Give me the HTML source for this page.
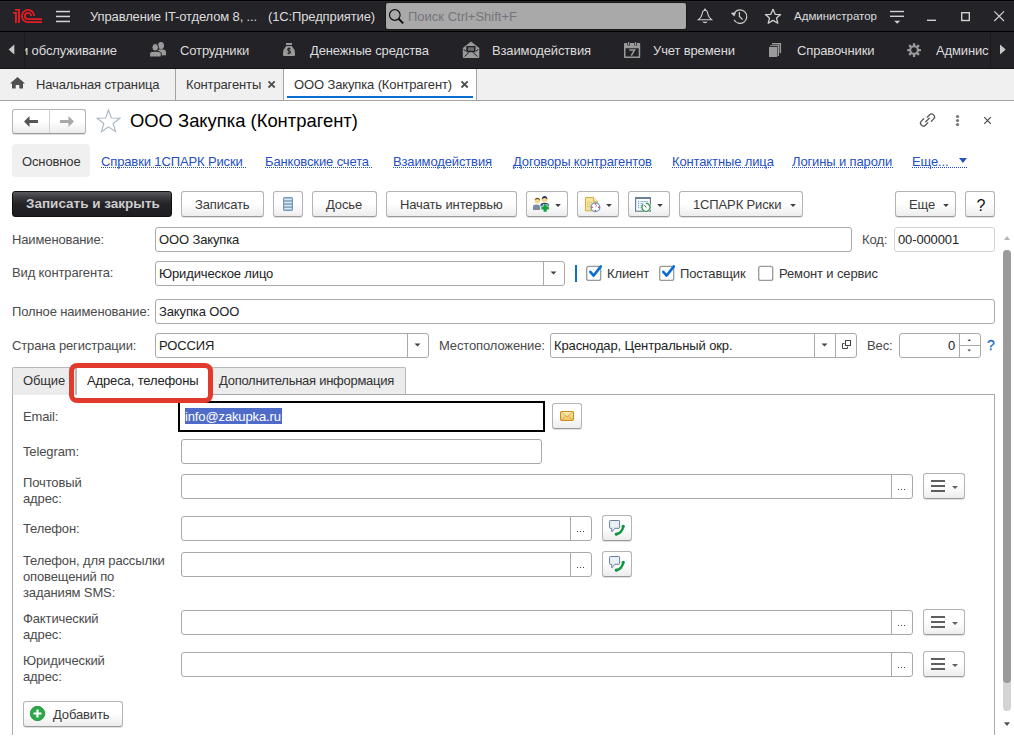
<!DOCTYPE html>
<html><head><meta charset="utf-8">
<style>
html,body{margin:0;padding:0;width:1014px;height:747px;overflow:hidden;background:#fff;font-family:"Liberation Sans",sans-serif;}
.a{position:absolute;}
.t{position:absolute;white-space:nowrap;font-size:13px;line-height:16px;margin-top:1px;letter-spacing:-0.13px;}
svg{position:absolute;overflow:visible;}
#top{left:0;top:0;width:1014px;height:31px;background:#242328;}
#topline{left:0;top:31px;width:1014px;height:1px;background:#000;}
#sec{left:0;top:32px;width:1014px;height:36px;background:#232227;}
#secline{left:0;top:68px;width:1014px;height:1px;background:#141414;}
#tabs{left:0;top:69px;width:1014px;height:31px;background:#f0f0f0;}
#tabsline{left:0;top:100px;width:1014px;height:1px;background:#a3a3a3;}
.lt{color:#dcdcdc;}
.sep{position:absolute;width:1px;background:#a3a3a3;}
.btn{position:absolute;box-sizing:border-box;border:1px solid #b3b3b3;border-bottom-color:#9a9a9a;border-radius:3px;background:linear-gradient(#ffffff 0%,#ffffff 48%,#ededed 100%);box-shadow:0 1px 0 rgba(0,0,0,0.12);}
.fld{position:absolute;box-sizing:border-box;border:1px solid #a9a9a9;border-radius:3px;background:#fff;}
.lbl{position:absolute;white-space:nowrap;font-size:13px;line-height:16px;color:#4a4a4a;margin-top:1px;letter-spacing:-0.13px;}
.link{position:absolute;white-space:nowrap;font-size:13px;line-height:16px;color:#2550c4;margin-top:1px;letter-spacing:-0.13px;}
.ul{position:absolute;height:1px;background-image:linear-gradient(to right,#2550c4 50%,transparent 50%);background-size:2px 1px;}
</style></head><body>
<!-- TOP BAR -->
<div class="a" id="top"></div>
<div class="a" id="topline"></div>
<div class="a" style="left:0;top:0;width:1014px;height:1px;background:#000;"></div>
<div class="a" style="left:0;top:1px;width:1014px;height:1px;background:#29282d;"></div>
<svg width="1014" height="31" style="left:0;top:0">
  <!-- 1C logo -->
  <g fill="#e21d23">
    <rect x="15" y="9" width="5" height="1.6"/>
    <rect x="18" y="9" width="1.9" height="14"/>
    <rect x="13" y="12" width="4" height="1.6"/>
    <rect x="15" y="12" width="1.9" height="11"/>
  </g>
  <g fill="none" stroke="#e21d23" stroke-width="1.8">
    <path d="M34.1 16 A6.1 6.1 0 1 0 28 22.1 L42 22.1"/>
    <path d="M31.1 16 A3.1 3.1 0 1 0 28 19.1 L42 19.1"/>
  </g>
  <!-- hamburger -->
  <g fill="#d6d6d6">
    <rect x="56" y="10.8" width="14" height="1.5"/>
    <rect x="56" y="15.7" width="14" height="1.5"/>
    <rect x="56" y="20.7" width="14" height="1.5"/>
  </g>
  <!-- search box -->
  <rect x="385.5" y="2.5" width="301" height="27" rx="2.5" fill="none" stroke="#19191b" stroke-width="1"/><rect x="386" y="3" width="300" height="26" rx="2" fill="#a9a9a9"/>
  <circle cx="394.8" cy="15" r="5.3" fill="none" stroke="#111" stroke-width="1.2"/>
  <path d="M398.6 18.8 L403.2 23.4" stroke="#111" stroke-width="2"/>
  <!-- bell -->
  <g fill="none" stroke="#cfcfcf" stroke-width="1.1">
    <path d="M705 10.3 C702.6 10.3 702.4 12.2 702.1 14.2 C701.7 17 700.2 18.4 698.4 19.8 L711.6 19.8 C709.8 18.4 708.3 17 707.9 14.2 C707.6 12.2 707.4 10.3 705 10.3 Z"/>
  </g>
  <circle cx="705" cy="9.6" r="1" fill="#cfcfcf"/>
  <path d="M702 21.7 L708 21.7 Q705 24.6 702 21.7 Z" fill="#cfcfcf"/>
  <!-- history -->
  <g fill="none" stroke="#cfcfcf" stroke-width="1.2">
    <path d="M734.95 12.05 A6.8 6.8 0 1 1 734.00 19.79"/>
    <path d="M739.4 12 L739.4 16.5 L742.6 19.5"/>
  </g>
  <path d="M730.8 13.1 L736.2 12 L734.3 16.6 Z" fill="#cfcfcf"/>
  <!-- star -->
  <path d="M773 9.3 L775.2 14.3 L780.6 14.6 L776.5 18.1 L777.8 23.2 L773 20.4 L768.2 23.2 L769.5 18.1 L765.4 14.6 L770.8 14.3 Z" fill="none" stroke="#d0d0d0" stroke-width="1.3" stroke-linejoin="round"/>
  <!-- filter -->
  <g fill="#d0d0d0">
    <rect x="890" y="10.8" width="14" height="1.4"/>
    <rect x="890" y="15.6" width="14" height="1.4"/>
    <path d="M894.2 20.8 L900.2 20.8 L897.2 23.8 Z"/>
  </g>
  <!-- minimize -->
  <rect x="927" y="19.6" width="9" height="1.4" fill="#d0d0d0"/>
  <!-- maximize -->
  <rect x="961.7" y="12.7" width="7.6" height="7.8" fill="none" stroke="#d0d0d0" stroke-width="1.4"/>
  <!-- close -->
  <path d="M994.3 11.3 L1004 21 M1004 11.3 L994.3 21" stroke="#d0d0d0" stroke-width="1.2"/>
</svg>
<div class="t lt" style="left:90px;top:8px;">Управление IT-отделом 8, ...</div>
<div class="t lt" style="left:268px;top:8px;">(1С:Предприятие)</div>
<div class="t" style="left:408px;top:8px;color:#75757c;letter-spacing:0;">Поиск Ctrl+Shift+F</div>
<div class="t lt" style="left:794px;top:7px;font-size:11.5px;letter-spacing:0;">Администратор</div>

<!-- SECTIONS BAR -->
<div class="a" id="sec"></div>
<div class="a" id="secline"></div>
<div class="a" style="left:24px;top:32px;width:1px;height:36px;background:#1a1a1c;"></div>
<div class="a" style="left:990px;top:32px;width:1px;height:36px;background:#1a1a1c;"></div>
<div class="a" style="left:25px;top:32px;width:964px;height:36px;overflow:hidden;">
  <div class="t lt" style="left:-4px;top:10px;">и обслуживание</div>
  <div class="t lt" style="left:155px;top:10px;">Сотрудники</div>
  <div class="t lt" style="left:285px;top:10px;">Денежные средства</div>
  <div class="t lt" style="left:467px;top:10px;">Взаимодействия</div>
  <div class="t lt" style="left:628px;top:10px;">Учет времени</div>
  <div class="t lt" style="left:772px;top:10px;">Справочники</div>
  <div class="t lt" style="left:911px;top:10px;">Администрирование</div>
</div>
<svg width="1014" height="36" style="left:0;top:32px">
  <path d="M14.3 12.6 L14.3 22.5 L8.6 17.5 Z" fill="#c8c8c8"/>
  <path d="M1000 12.6 L1000 22.5 L1005.7 17.5 Z" fill="#c8c8c8"/>
</svg>


<svg width="1014" height="747" style="left:0;top:0">
  <g fill="#9a9a9a">
    <!-- people -->
    <ellipse cx="161" cy="45.5" rx="3" ry="3.6"/>
    <path d="M157.5 55.5 L157.5 51.5 Q158 49.3 161 49.3 Q165.5 49.3 166 51.5 L166 55.3 Z"/>
    <ellipse cx="155.2" cy="47.4" rx="3.3" ry="3.8" stroke="#232227" stroke-width="1"/>
    <path d="M149.6 57 L149.6 53.5 Q150 51.2 155.2 51.2 Q160.6 51.2 161.2 53.5 L161.2 57 Z" stroke="#232227" stroke-width="1"/>
    <!-- money bag -->
    <rect x="286" y="43" width="6" height="2"/>
    <path d="M286.2 46 L291.8 46 Q295 49.5 295 53 L295 55 Q295 56 294 56 L284 56 Q283 56 283 55 L283 53 Q283 49.5 286.2 46 Z"/>
    <!-- envelope -->
    <path d="M471 41.5 L479.3 48 L479.3 57 Q479.3 58 478.3 58 L463.8 58 Q462.8 58 462.8 57 L462.8 48 Z"/>
    <!-- calendar -->
    <path d="M625 43 H639.2 Q640.2 43 640.2 44 V57 Q640.2 58 639.2 58 H625 Q624 58 624 57 V44 Q624 43 625 43 Z M625.5 48.2 V56.5 H638.7 V48.2 Z" fill-rule="evenodd"/>
    <!-- copies -->
    <rect x="769" y="46.8" width="8.1" height="10.2"/>
    <path d="M770 45 H779 V56 H777.6 V46.4 H770 Z"/>
    <path d="M772 43 H781.1 V53 H779.6 V44.5 H772 Z"/>
    <!-- gear -->
    <path d="M912.91 45.31 L912.89 43.17 L915.25 43.17 L915.23 45.31 L916.61 45.88 L918.11 44.35 L919.79 46.03 L918.26 47.53 L918.83 48.91 L920.97 48.89 L920.97 51.25 L918.83 51.23 L918.26 52.61 L919.79 54.11 L918.11 55.79 L916.61 54.26 L915.23 54.83 L915.25 56.97 L912.89 56.97 L912.91 54.83 L911.53 54.26 L910.03 55.79 L908.35 54.11 L909.88 52.61 L909.31 51.23 L907.17 51.25 L907.17 48.89 L909.31 48.91 L909.88 47.53 L908.35 46.03 L910.03 44.35 L911.53 45.88 Z M916.87 50.07 A2.8 2.8 0 1 0 911.27 50.07 A2.8 2.8 0 1 0 916.87 50.07 Z" fill-rule="evenodd"/>
  </g>
  <g fill="none" stroke="#232227" stroke-width="1">
    <path d="M290.5 48.8 Q289 48 288 48.8 Q287.3 50 289 50.7 Q290.8 51.4 290.2 52.8 Q289.2 53.8 287.5 53" stroke-width="1.2"/>
    <path d="M289 47.5 V54.3" stroke-width="0.9"/>
  </g>
  <g>
    <rect x="466.3" y="46" width="9.2" height="6.2" fill="#232227"/>
    <rect x="468" y="47.3" width="6" height="3.5" fill="#6a6a6a"/>
    <path d="M464.5 56.5 L469.5 52 M477.5 56.5 L472.5 52 M463.5 49.5 L466 51 M478.5 49.5 L476 51" stroke="#232227" stroke-width="1" fill="none"/>
    <path d="M628.6 41.8 V45.5 M635.6 41.8 V45.5" stroke="#232227" stroke-width="2.4"/>
    <path d="M628.6 42 V45.2 M635.6 42 V45.2" stroke="#9a9a9a" stroke-width="1.1"/>
    <path d="M629.3 50 H634.6 L631.3 55.7" stroke="#9a9a9a" stroke-width="1.5" fill="none"/>
    <path d="M768.5 46.3 H777.6" stroke="#232227" stroke-width="1"/>
  </g>
</svg>

<!-- TABS BAR -->
<div class="a" id="tabs"></div>
<div class="a" id="tabsline"></div>
<div class="a" style="left:284px;top:69px;width:192px;height:31px;background:#fff;"></div>
<div class="sep" style="left:175px;top:69px;height:31px;"></div>
<div class="sep" style="left:283px;top:69px;height:31px;"></div>
<div class="sep" style="left:476px;top:69px;height:31px;"></div>
<div class="a" style="left:287px;top:96px;width:186px;height:2px;background:#0a6ed1;"></div>
<svg width="1014" height="31" style="left:0;top:69px">
  <path d="M17.5 8 L25 14.5 L23 14.5 L23 19.6 L19.3 19.6 L19.3 16 L15.7 16 L15.7 19.6 L12 19.6 L12 14.5 L10 14.5 Z" fill="#4f4f4f"/>
  <path d="M268.5 12.3 L274.7 18.5 M274.7 12.3 L268.5 18.5" stroke="#505050" stroke-width="1.8"/>
  <path d="M461.5 12.3 L467.7 18.5 M467.7 12.3 L461.5 18.5" stroke="#505050" stroke-width="1.8"/>
</svg>
<div class="t" style="left:36px;top:76px;color:#333;">Начальная страница</div>
<div class="t" style="left:186px;top:76px;color:#333;">Контрагенты</div>
<div class="t" style="left:294px;top:76px;color:#333;">ООО Закупка (Контрагент)</div>

<!-- FORM -->

<!-- form header -->
<div class="btn" style="left:12px;top:109px;width:74px;height:25px;"></div>
<div class="a" style="left:49px;top:110px;width:1px;height:23px;background:#d0d0d0;"></div>
<svg width="1014" height="40" style="left:0;top:102px">
  <path d="M24 19.5 L29.5 14 L29.5 18 L38 18 L38 21 L29.5 21 L29.5 25 Z" fill="#555"/>
  <path d="M74 19.5 L68.5 14 L68.5 18 L60 18 L60 21 L68.5 21 L68.5 25 Z" fill="#a8a8a8"/>
  <path d="M108.50 8.00 L111.38 16.04 L119.91 16.29 L113.16 21.51 L115.55 29.71 L108.50 24.90 L101.45 29.71 L103.84 21.51 L97.09 16.29 L105.62 16.04 Z" fill="none" stroke="#a9b5c1" stroke-width="1.1" stroke-linejoin="miter"/>
  <!-- link icon -->
  <g fill="none" stroke="#555" stroke-width="1.25" stroke-linecap="round" transform="translate(0,-102)">
    <path d="M927.2 117.2 L929.6 114.8 A2.9 2.9 0 0 1 933.7 118.9 L931.3 121.3"/>
    <path d="M927.8 122.8 L925.4 125.2 A2.9 2.9 0 0 1 921.3 121.1 L923.7 118.7"/>
    <path d="M925.7 121.8 L929.3 118.2"/>
  </g>
  <g fill="#777">
    <circle cx="957.5" cy="14.5" r="1.6"/>
    <circle cx="957.5" cy="18.5" r="1.6"/>
    <circle cx="957.5" cy="22.6" r="1.6"/>
  </g>
  <path d="M984.2 15.2 L990.8 21.8 M990.8 15.2 L984.2 21.8" stroke="#444" stroke-width="1.1"/>
</svg>
<div class="t" style="left:130px;top:109px;font-size:18.4px;line-height:22px;color:#000;letter-spacing:0;">ООО Закупка (Контрагент)</div>

<!-- nav links -->
<div class="a" style="left:12px;top:144px;width:78px;height:33px;background:#f0f0f0;border-radius:4px;"></div>
<div class="t" style="left:22px;top:153px;color:#333;">Основное</div>
<div class="link" style="left:101px;top:153px;">Справки 1СПАРК Риски</div>
<div class="ul" style="left:101px;top:167px;width:145px;"></div>
<div class="link" style="left:265px;top:153px;">Банковские счета</div>
<div class="ul" style="left:265px;top:167px;width:108px;"></div>
<div class="link" style="left:393px;top:153px;">Взаимодействия</div>
<div class="ul" style="left:393px;top:167px;width:100px;"></div>
<div class="link" style="left:513px;top:153px;">Договоры контрагентов</div>
<div class="ul" style="left:513px;top:167px;width:139px;"></div>
<div class="link" style="left:672px;top:153px;">Контактные лица</div>
<div class="ul" style="left:672px;top:167px;width:100px;"></div>
<div class="link" style="left:792px;top:153px;">Логины и пароли</div>
<div class="ul" style="left:792px;top:167px;width:101px;"></div>
<div class="link" style="left:912px;top:153px;">Еще...</div>
<div class="ul" style="left:912px;top:167px;width:56px;"></div>
<svg width="20" height="10" style="left:958px;top:157px"><path d="M1 1 L9 1 L5 6 Z" fill="#2a53c0"/></svg>

<!-- command bar -->
<div class="a" style="left:12px;top:191px;width:160px;height:26px;box-sizing:border-box;border:1px solid #101012;border-radius:3px;background:linear-gradient(#5a595e 0%,#38373c 25%,#242328 50%,#1e1d21 100%);"></div>
<div class="t" style="left:26px;top:195px;font-weight:bold;color:#cdcdcd;font-size:13.5px;letter-spacing:0;">Записать и закрыть</div>
<div class="btn" style="left:181px;top:191px;width:83px;height:26px;"></div>
<div class="t" style="left:195px;top:196px;color:#3a3a3a;">Записать</div>
<div class="btn" style="left:273px;top:191px;width:30px;height:26px;"></div>
<svg width="14" height="16" style="left:283px;top:197px">
  <rect x="0" y="0" width="10" height="14" rx="1.8" fill="#7594b2"/>
  <g fill="#d4e6f5"><rect x="1.2" y="1.4" width="7.6" height="1.9"/><rect x="1.2" y="4.6" width="7.6" height="1.8"/><rect x="1.2" y="7.7" width="7.6" height="1.8"/><rect x="1.2" y="10.8" width="7.6" height="1.8"/></g>
</svg>
<div class="btn" style="left:312px;top:191px;width:65px;height:26px;"></div>
<div class="t" style="left:326px;top:196px;color:#3a3a3a;">Досье</div>
<div class="btn" style="left:386px;top:191px;width:131px;height:26px;"></div>
<div class="t" style="left:400px;top:196px;color:#3a3a3a;">Начать интервью</div>
<div class="btn" style="left:526px;top:191px;width:42px;height:26px;"></div>
<div class="btn" style="left:577px;top:191px;width:42px;height:26px;"></div>
<div class="btn" style="left:628px;top:191px;width:42px;height:26px;"></div>
<div class="btn" style="left:679px;top:191px;width:124px;height:26px;"></div>
<div class="t" style="left:693px;top:196px;color:#3a3a3a;">1СПАРК Риски</div>
<div class="btn" style="left:895px;top:191px;width:61px;height:26px;"></div>
<div class="t" style="left:909px;top:196px;color:#3a3a3a;">Еще</div>
<div class="btn" style="left:965px;top:191px;width:30px;height:26px;"></div>
<div class="t" style="left:976.5px;top:197px;color:#111;font-size:16px;">?</div>
<svg width="1014" height="30" style="left:0;top:191px">
  <g fill="#3e3e3e">
    <path d="M555.2 13 L560.8 13 L558 16 Z"/>
    <path d="M606.2 13 L611.8 13 L609 16 Z"/>
    <path d="M657.2 13 L662.8 13 L660 16 Z"/>
    <path d="M790.2 13 L795.8 13 L793 16 Z"/>
    <path d="M943.2 13 L948.8 13 L946 16 Z"/>
  </g>
  <!-- people plus icon -->
  <g>
    <path d="M533 19 L533 15.8 Q533 13.6 536.4 13.6 Q540 13.6 540 15.8 L540 19 Z" fill="#7190b0"/>
    <path d="M537.4 14 L536.8 18.8 L538 18.8 Z" fill="#e86a40"/>
    <circle cx="537.4" cy="9.8" r="2.7" fill="#f2d88a"/>
    <path d="M534.7 9.6 Q534.8 6.8 537.4 6.7 Q540 6.8 540.1 9.6 Q539 8.2 537.4 8.3 Q535.8 8.2 534.7 9.6 Z" fill="#8a4d12"/>
    <path d="M540.5 15.5 L540.5 13.8 Q541 11.8 544.6 11.8 Q548.3 11.8 549 13.8 L549 15.5 Z" fill="#2e3d6e"/>
    <circle cx="544.6" cy="8.6" r="2.8" fill="#f2d88a"/>
    <path d="M541.8 8.4 Q541.9 5.2 544.6 5.1 Q547.3 5.2 547.4 8.4 Q546.3 6.8 544.6 6.9 Q542.9 6.8 541.8 8.4 Z" fill="#2e3050"/>
    <path d="M541 17 H549.2 M545.1 12.9 V21" stroke="#fff" stroke-width="4.6"/>
    <path d="M541.3 17 H548.9 M545.1 13.2 V20.8" stroke="#13a043" stroke-width="3.2"/>
  </g>
  <!-- doc clock icon -->
  <g>
    <path d="M585.5 6.5 L593.5 6.5 L597.3 10.3 L597.3 19.8 L585.5 19.8 Z" fill="#f6e39a" stroke="#d2ad4a" stroke-width="1" stroke-linejoin="round"/>
    <path d="M593.5 6.5 L593.5 10.3 L597.3 10.3" fill="#fbf0c8" stroke="#d2ad4a" stroke-width="0.9"/>
    <path d="M587 11.5 H588.5 M589.5 11.5 H592 M587 13.5 H588 M589 13.5 H590.5 M587 15.5 H589.5" stroke="#d9bd6a" stroke-width="0.9"/>
    <circle cx="595.4" cy="16.3" r="4.4" fill="#fff" stroke="#6a9ac8" stroke-width="1.3"/>
    <g fill="#e01010"><circle cx="595.4" cy="13" r="0.7"/><circle cx="595.4" cy="19.6" r="0.7"/><circle cx="592.1" cy="16.3" r="0.7"/><circle cx="598.7" cy="16.3" r="0.7"/></g>
    <path d="M595.4 16.3 L597 13.8" stroke="#7aa0d8" stroke-width="1"/>
  </g>
  <!-- list clock icon -->
  <g>
    <rect x="635.6" y="6.6" width="14.8" height="13.6" fill="#fff" stroke="#6a7f98" stroke-width="1.2"/>
    <rect x="635" y="6" width="16" height="2" fill="#6a7f98"/>
    <g fill="#5b9ae0"><rect x="638" y="10.1" width="1.2" height="1.2"/><rect x="638" y="12.1" width="1.2" height="1.2"/><rect x="638" y="14.1" width="1.2" height="1.2"/><rect x="638" y="16.1" width="1.2" height="1.2"/></g>
    <path d="M640.3 10.7 H648 M640.3 12.7 H644.5 M640.3 14.7 H642.5 M640.3 16.7 H642" stroke="#7aaae6" stroke-width="0.9"/>
    <circle cx="646.4" cy="16.3" r="4.9" fill="#fff"/>
    <path d="M643.2 13.3 A4.1 4.1 0 1 0 646.4 12.2" fill="none" stroke="#3c9a52" stroke-width="1.4"/>
    <path d="M645.5 12.6 L646.9 11.3 L647 13.6 Z" fill="#3c9a52"/>
    <path d="M644.3 14.3 L646.4 16.3" stroke="#3a4a5a" stroke-width="1"/>
  </g>
</svg>

<!-- fields -->
<div class="lbl" style="left:12px;top:231px;">Наименование:</div>
<div class="fld" style="left:155px;top:227px;width:697px;height:25px;"></div>
<div class="t" style="left:159px;top:231px;color:#222;">ООО Закупка</div>
<div class="lbl" style="left:862px;top:231px;">Код:</div>
<div class="fld" style="left:894px;top:227px;width:101px;height:25px;border-color:#d4d4d4;"></div>
<div class="t" style="left:898px;top:231px;color:#222;">00-000001</div>

<div class="lbl" style="left:12px;top:264px;">Вид контрагента:</div>
<div class="fld" style="left:155px;top:261px;width:410px;height:25px;"></div>
<div class="a" style="left:543px;top:262px;width:1px;height:23px;background:#a9a9a9;"></div>
<div class="t" style="left:159px;top:265px;color:#222;">Юридическое лицо</div>
<div class="a" style="left:575px;top:265px;width:2px;height:17px;background:#0a70d0;"></div>
<svg width="1014" height="40" style="left:0;top:256px">
  <path d="M550.5 15.5 L556.5 15.5 L553.5 18.5 Z" fill="#444"/>
  <g fill="#fff" stroke="#999" stroke-width="1.3">
    <rect x="586.7" y="10.4" width="14" height="14" rx="2"/>
    <rect x="659.7" y="10.4" width="14" height="14" rx="2"/>
    <rect x="758.7" y="10.4" width="14" height="14" rx="2"/>
  </g>
  <g fill="none" stroke="#0a70d0" stroke-width="2.6" stroke-linecap="round" stroke-linejoin="round">
    <path d="M590.3 15.8 L593.6 19.6 L600.8 10.4"/>
    <path d="M663.3 15.8 L666.6 19.6 L673.8 10.4"/>
  </g>
</svg>
<div class="t" style="left:607px;top:265px;color:#333;">Клиент</div>
<div class="t" style="left:680px;top:265px;color:#333;">Поставщик</div>
<div class="t" style="left:779px;top:265px;color:#333;">Ремонт и сервис</div>

<div class="lbl" style="left:12px;top:303px;">Полное наименование:</div>
<div class="fld" style="left:155px;top:299px;width:840px;height:25px;"></div>
<div class="t" style="left:159px;top:303px;color:#222;">Закупка ООО</div>

<div class="lbl" style="left:12px;top:337px;">Страна регистрации:</div>
<div class="fld" style="left:155px;top:333px;width:274px;height:25px;"></div>
<div class="a" style="left:407px;top:334px;width:1px;height:23px;background:#a9a9a9;"></div>
<div class="t" style="left:159px;top:337px;color:#222;">РОССИЯ</div>
<div class="lbl" style="left:439px;top:337px;">Местоположение:</div>
<div class="fld" style="left:550px;top:333px;width:307px;height:25px;"></div>
<div class="a" style="left:814px;top:334px;width:1px;height:23px;background:#a9a9a9;"></div>
<div class="a" style="left:835px;top:334px;width:1px;height:23px;background:#a9a9a9;"></div>
<div class="t" style="left:554px;top:337px;color:#222;">Краснодар, Центральный окр.</div>
<div class="lbl" style="left:867px;top:337px;">Вес:</div>
<div class="fld" style="left:899px;top:333px;width:82px;height:25px;"></div>
<div class="a" style="left:959px;top:334px;width:1px;height:23px;background:#a9a9a9;"></div>
<div class="a" style="left:960px;top:345px;width:20px;height:1px;background:#a9a9a9;"></div>
<div class="t" style="left:948px;top:337px;color:#222;">0</div>
<div class="t" style="left:987px;top:336px;color:#1a6cc0;font-size:14px;letter-spacing:0;-webkit-text-stroke:0.3px #1a6cc0;">?</div>
<svg width="1014" height="40" style="left:0;top:328px">
  <path d="M414.5 15.5 L420.5 15.5 L417.5 18.5 Z" fill="#444"/>
  <path d="M821.5 15.5 L827.5 15.5 L824.5 18.5 Z" fill="#444"/>
  <g fill="none" stroke="#444" stroke-width="1">
    <rect x="845.5" y="12.5" width="5" height="5"/>
    <path d="M844.5 15.5 H842.5 V20.5 H847.5 V18.5"/>
  </g>
  <path d="M967.5 13 L971 13 L969.2 11 Z" fill="#444"/>
  <path d="M967.5 21.5 L971 21.5 L969.2 23.5 Z" fill="#444"/>
</svg>

<!-- tabs -->
<div class="a" style="left:12px;top:394px;width:983px;height:1px;background:#a9a9a9;"></div>
<div class="a" style="left:12px;top:394px;width:1px;height:341px;background:#a9a9a9;"></div>
<div class="a" style="left:994px;top:394px;width:1px;height:341px;background:#a9a9a9;"></div>
<div class="a" style="left:12px;top:367px;width:64px;height:28px;box-sizing:border-box;border:1px solid #b9b9b9;border-bottom:none;background:#ececec;border-radius:2px 0 0 0;"></div>
<div class="a" style="left:211px;top:367px;width:195px;height:27px;box-sizing:border-box;border:1px solid #b9b9b9;border-bottom:none;background:#ececec;border-radius:0 2px 0 0;"></div>
<div class="a" style="left:76px;top:366px;width:136px;height:29px;box-sizing:border-box;border:1px solid #b9b9b9;border-bottom:none;background:#fff;"></div>
<div class="t" style="left:23px;top:372px;color:#333;">Общие</div>
<div class="t" style="left:87px;top:372px;color:#222;">Адреса, телефоны</div>
<div class="t" style="left:219px;top:372px;color:#333;letter-spacing:-0.27px;">Дополнительная информация</div>

<!-- email -->
<div class="lbl" style="left:23px;top:408px;">Email:</div>
<div class="a" style="left:178px;top:401px;width:367px;height:31px;box-sizing:border-box;border:2px solid #000;background:#fff;"></div>
<div class="a" style="left:185px;top:408px;width:97px;height:16px;background:#4f6bc9;"></div>
<div class="t" style="left:185px;top:408px;color:#fff;">info@zakupka.ru</div>
<div class="btn" style="left:552px;top:403px;width:30px;height:26px;"></div>
<svg width="16" height="12" style="left:559px;top:410px">
  <defs><linearGradient id="envg" x1="0" y1="0" x2="0" y2="1"><stop offset="0" stop-color="#fdf2c0"/><stop offset="1" stop-color="#efc563"/></linearGradient></defs><rect x="1.5" y="1.5" width="13" height="9" rx="1.4" fill="url(#envg)" stroke="#cc8a1e" stroke-width="1.1"/>
  <path d="M2 2 L8 7 L14 2 M2 10.5 L6.5 6.3 M14 10.5 L9.5 6.3" fill="none" stroke="#d4952a" stroke-width="0.8"/>
</svg>

<!-- red highlight -->
<div class="a" style="left:69px;top:363px;width:144px;height:40px;box-sizing:border-box;border:5px solid #e2392d;border-radius:8px;"></div>

<div class="lbl" style="left:23px;top:443px;">Telegram:</div>
<div class="fld" style="left:181px;top:439px;width:361px;height:25px;"></div>

<div class="lbl" style="left:23px;top:474px;">Почтовый<br>адрес:</div>
<div class="fld" style="left:181px;top:474px;width:732px;height:25px;"></div>
<div class="a" style="left:891px;top:475px;width:1px;height:23px;background:#a9a9a9;"></div>
<div class="btn" style="left:923px;top:473px;width:42px;height:26px;"></div>

<div class="lbl" style="left:23px;top:520px;">Телефон:</div>
<div class="fld" style="left:181px;top:516px;width:411px;height:25px;"></div>
<div class="a" style="left:570px;top:517px;width:1px;height:23px;background:#a9a9a9;"></div>
<div class="btn" style="left:602px;top:515px;width:30px;height:26px;"></div>

<div class="lbl" style="left:23px;top:552px;">Телефон, для рассылки<br>оповещений по<br>заданиям SMS:</div>
<div class="fld" style="left:181px;top:552px;width:411px;height:25px;"></div>
<div class="a" style="left:570px;top:553px;width:1px;height:23px;background:#a9a9a9;"></div>
<div class="btn" style="left:602px;top:551px;width:30px;height:26px;"></div>

<div class="lbl" style="left:23px;top:610px;">Фактический<br>адрес:</div>
<div class="fld" style="left:181px;top:610px;width:732px;height:25px;"></div>
<div class="a" style="left:891px;top:611px;width:1px;height:23px;background:#a9a9a9;"></div>
<div class="btn" style="left:923px;top:609px;width:42px;height:26px;"></div>

<div class="lbl" style="left:23px;top:652px;">Юридический<br>адрес:</div>
<div class="fld" style="left:181px;top:652px;width:732px;height:25px;"></div>
<div class="a" style="left:891px;top:653px;width:1px;height:23px;background:#a9a9a9;"></div>
<div class="btn" style="left:923px;top:651px;width:42px;height:26px;"></div>

<div class="btn" style="left:23px;top:701px;width:100px;height:26px;"></div>
<svg width="16" height="16" style="left:30px;top:706px">
  <circle cx="7.5" cy="7.5" r="7.2" fill="#2aa84a"/>
  <circle cx="7.5" cy="7.5" r="7.2" fill="none" stroke="#1a8a38" stroke-width="0.8"/>
  <path d="M7.5 3.5 V11.5 M3.5 7.5 H11.5" stroke="#fff" stroke-width="2.2"/>
</svg>
<div class="t" style="left:53px;top:706px;color:#3a3a3a;">Добавить</div>

<svg width="1014" height="747" style="left:0;top:0">
  <!-- dots ... -->
  <g fill="#444">
    <rect x="898" y="489" width="1" height="1"/><rect x="901" y="489" width="1" height="1"/><rect x="904" y="489" width="1" height="1"/>
    <rect x="577" y="531" width="1" height="1"/><rect x="580" y="531" width="1" height="1"/><rect x="583" y="531" width="1" height="1"/>
    <rect x="577" y="567" width="1" height="1"/><rect x="580" y="567" width="1" height="1"/><rect x="583" y="567" width="1" height="1"/>
    <rect x="898" y="625" width="1" height="1"/><rect x="901" y="625" width="1" height="1"/><rect x="904" y="625" width="1" height="1"/>
    <rect x="898" y="667" width="1" height="1"/><rect x="901" y="667" width="1" height="1"/><rect x="904" y="667" width="1" height="1"/>
  </g>
  <!-- hamburger buttons -->
  <g fill="#5e5e5e">
    <rect x="931" y="480" width="14" height="2"/><rect x="931" y="485" width="14" height="2"/><rect x="931" y="490" width="14" height="2"/>
    <path d="M952 486 L958 486 L955 489 Z"/>
    <rect x="931" y="616" width="14" height="2"/><rect x="931" y="621" width="14" height="2"/><rect x="931" y="626" width="14" height="2"/>
    <path d="M952 622 L958 622 L955 625 Z"/>
    <rect x="931" y="658" width="14" height="2"/><rect x="931" y="663" width="14" height="2"/><rect x="931" y="668" width="14" height="2"/>
    <path d="M952 664 L958 664 L955 667 Z"/>
  </g>
  <!-- phone icons -->
  <g id="ph1">
    <path d="M610.3 520.5 H618.9 Q619.6 520.5 619.6 521.2 V527.6 Q619.6 528.3 618.9 528.3 H614.8 L611.9 531.9 L611.6 528.3 H610.3 Q609.6 528.3 609.6 527.6 V521.2 Q609.6 520.5 610.3 520.5 Z" fill="#e9f0f8" stroke="#6a7f98" stroke-width="1"/>
    <path d="M616.2 534.2 Q621.8 533.2 623.3 526.4" fill="none" stroke="#0f9640" stroke-width="2.4" stroke-linecap="round"/><circle cx="616.3" cy="534.1" r="1.6" fill="#0f9640"/><circle cx="623.2" cy="526.3" r="1.6" fill="#0f9640"/>
  </g>
  <g transform="translate(0,36)">
    <path d="M610.3 520.5 H618.9 Q619.6 520.5 619.6 521.2 V527.6 Q619.6 528.3 618.9 528.3 H614.8 L611.9 531.9 L611.6 528.3 H610.3 Q609.6 528.3 609.6 527.6 V521.2 Q609.6 520.5 610.3 520.5 Z" fill="#e9f0f8" stroke="#6a7f98" stroke-width="1"/>
    <path d="M616.2 534.2 Q621.8 533.2 623.3 526.4" fill="none" stroke="#0f9640" stroke-width="2.4" stroke-linecap="round"/><circle cx="616.3" cy="534.1" r="1.6" fill="#0f9640"/><circle cx="623.2" cy="526.3" r="1.6" fill="#0f9640"/>
  </g>
  <!-- scrollbar -->
  <rect x="1003" y="250" width="8" height="461" rx="4" fill="#d4d4d4"/>
  <rect x="1003" y="250" width="8" height="433" rx="4" fill="#9a9a9a"/>
  <path d="M1004 240 L1010 240 L1007 236 Z" fill="#b4b4b4"/>
  <path d="M1004 722.3 L1010 722.3 L1007 726 Z" fill="#505050"/>
</svg>

</body></html>
